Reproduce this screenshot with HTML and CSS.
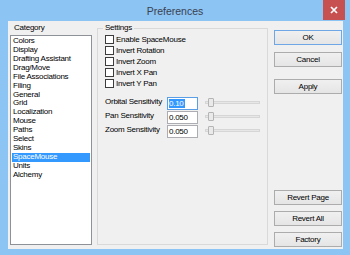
FILE: index.html
```html
<!DOCTYPE html>
<html lang="en">
<head>
  <meta charset="UTF-8" />
  <title>Preferences</title>
  <link rel="stylesheet" href="styles.css">
</head>
<body>

  <div class="window">
    <div class="titlebar">
      <span class="title">Preferences</span>
      <button class="close-btn" aria-label="Close">
        <svg width="8" height="8" viewBox="0 0 8 8"><path d="M1 1L7 7M7 1L1 7" stroke="#fff" stroke-width="1.7"/></svg>
      </button>
    </div>

    <div class="client">
      <!-- Category list -->
      <div class="category">
        <div class="caption">Category</div>
        <ul class="listbox">
          <li>Colors</li>
          <li>Display</li>
          <li>Drafting Assistant</li>
          <li>Drag/Move</li>
          <li>File Associations</li>
          <li>Filing</li>
          <li>General</li>
          <li>Grid</li>
          <li>Localization</li>
          <li>Mouse</li>
          <li>Paths</li>
          <li>Select</li>
          <li>Skins</li>
          <li class="selected">SpaceMouse</li>
          <li>Units</li>
          <li>Alchemy</li>
        </ul>
      </div>

      <!-- Settings -->
      <div class="group">
        <span class="legend">Settings</span>
        <div class="checks">
          <label class="check"><span class="box"></span>Enable SpaceMouse</label>
          <label class="check"><span class="box"></span>Invert Rotation</label>
          <label class="check"><span class="box"></span>Invert Zoom</label>
          <label class="check"><span class="box"></span>Invert X Pan</label>
          <label class="check"><span class="box"></span>Invert Y Pan</label>
        </div>
        <div class="sens-list">
          <div class="sens">
            <span class="sens-label">Orbital Sensitivity</span>
            <span class="field focused"><span class="sel">0.10</span></span>
            <span class="slider"><span class="thumb"></span></span>
          </div>
          <div class="sens">
            <span class="sens-label">Pan Sensitivity</span>
            <span class="field">0.050</span>
            <span class="slider"><span class="thumb"></span></span>
          </div>
          <div class="sens">
            <span class="sens-label">Zoom Sensitivity</span>
            <span class="field">0.050</span>
            <span class="slider"><span class="thumb"></span></span>
          </div>
        </div>
      </div>

      <!-- Buttons -->
      <div class="buttons">
        <button class="btn default">OK</button>
        <button class="btn">Cancel</button>
        <button class="btn apply">Apply</button>
        <div class="spacer"></div>
        <button class="btn low">Revert Page</button>
        <button class="btn low">Revert All</button>
        <button class="btn last">Factory</button>
      </div>
    </div>
  </div>

</body>
</html>
```

FILE: styles.css
```css
body {
  margin: 0;
  font-family: 'Liberation Sans', Arial, sans-serif;
  font-size: 8px;
  letter-spacing: -0.25px;
  color: #000;
}
.window {
  width: 350px;
  height: 255px;
  background: #8cc4f3;
  display: flex;
  flex-direction: column;
}
.titlebar {
  height: 21px;
  position: relative;
  display: flex;
  justify-content: center;
  align-items: center;
}
.title {
  font-size: 10.5px;
  letter-spacing: 0;
  color: #3a4150;
  padding-top: 1px;
}
.close-btn {
  position: absolute;
  top: 0;
  right: 5px;
  width: 22px;
  height: 20px;
  border: none;
  padding: 0;
  background: #c75050;
  display: flex;
  align-items: center;
  justify-content: center;
}

.client {
  flex: 1;
  margin: 0 7px 6px 8px;
  background: #f0f0f0;
  display: flex;
}

/* Category */
.category {
  width: 82px;
  margin: 2px 0 4px 2px;
  display: flex;
  flex-direction: column;
}
.caption {
  line-height: 10px;
  padding-left: 4px;
  margin-bottom: 2px;
}
.listbox {
  flex: 1;
  list-style: none;
  margin: 0;
  padding: 1.2px 1px 0 1px;
  background: #fff;
  border: 1px solid #8e9298;
}
.listbox li {
  line-height: 8.9px;
  height: 8.9px;
  padding-left: 1px;
  white-space: nowrap;
}
.listbox li.selected {
  background: #3399ff;
  color: #fff;
}

/* Settings group */
.group {
  width: 171px;
  box-sizing: border-box;
  margin: 7px 0 4px 5px;
  border: 1px solid #d9d9d9;
  position: relative;
  padding: 5px 0 0 7px;
}
.legend {
  position: absolute;
  top: -6px;
  left: 5px;
  padding: 0 2px;
  line-height: 10px;
  background: #f0f0f0;
}
.check {
  display: flex;
  align-items: center;
  height: 11px;
}
.box {
  width: 9px;
  height: 9px;
  box-sizing: border-box;
  border: 1px solid #3c3c3c;
  background: #fff;
  margin-right: 2px;
}
.sens-list {
  margin-top: 8px;
}
.sens {
  display: flex;
  align-items: flex-start;
  height: 14px;
}
.sens-label {
  width: 62px;
  line-height: 10px;
}
.field {
  width: 31px;
  height: 13px;
  box-sizing: border-box;
  border: 1px solid #abadb3;
  background: #fff;
  line-height: 11px;
  padding-left: 1px;
}
.field.focused {
  border-color: #5a9ee6;
}
.sel {
  background: #3399ff;
  color: #fff;
  padding: 0 1px 0 0;
}
.slider {
  width: 55px;
  height: 3px;
  margin: 4px 0 0 7px;
  box-sizing: border-box;
  background: #e7e7e7;
  border: 1px solid #d6d6d6;
  position: relative;
}
.thumb {
  position: absolute;
  left: 2px;
  top: -4px;
  width: 4px;
  height: 7px;
  background: #eaeaea;
  border: 1px solid #b4b4b4;
  border-radius: 1px;
}

/* Buttons */
.buttons {
  width: 68px;
  margin: 9px 1px 2px 6px;
  display: flex;
  flex-direction: column;
}
.btn {
  height: 15px;
  padding: 0;
  font-family: inherit;
  font-size: 8px;
  letter-spacing: -0.25px;
  color: #000;
  border: 1px solid #acacac;
  background: linear-gradient(#f0f0f0, #e5e5e5);
  margin-bottom: 7px;
}
.btn.default {
  border-color: #6fa7e6;
}
.btn.apply {
  margin-top: 5px;
}
.btn.low {
  margin-bottom: 6px;
}
.btn.last {
  margin-bottom: 0;
}
.spacer {
  flex: 1;
}
```
